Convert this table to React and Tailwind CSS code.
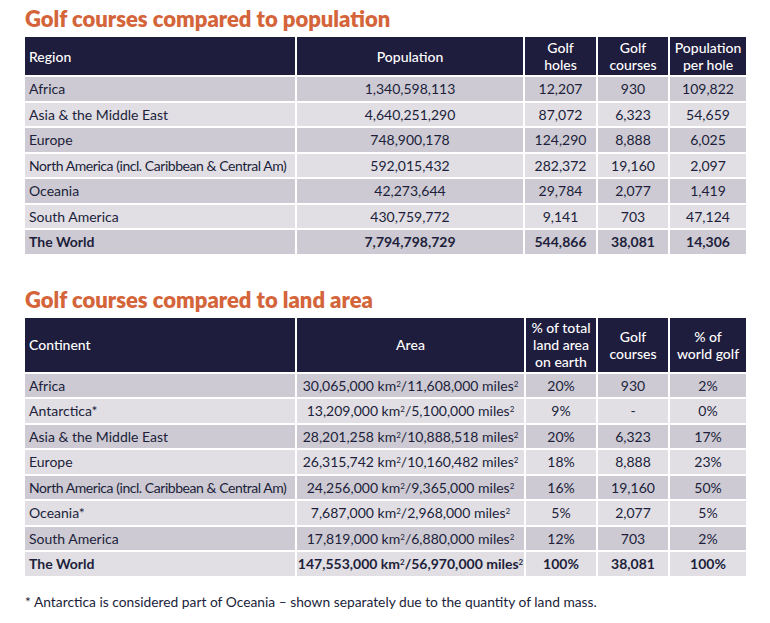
import React from 'react';

const popRows = [
  ['Africa', '1,340,598,113', '12,207', '930', '109,822'],
  ['Asia & the Middle East', '4,640,251,290', '87,072', '6,323', '54,659'],
  ['Europe', '748,900,178', '124,290', '8,888', '6,025'],
  ['North America (incl. Caribbean & Central Am)', '592,015,432', '282,372', '19,160', '2,097'],
  ['Oceania', '42,273,644', '29,784', '2,077', '1,419'],
  ['South America', '430,759,772', '9,141', '703', '47,124'],
];

const landRows = [
  ['Africa', '30,065,000', '11,608,000', '20%', '930', '2%'],
  ['Antarctica*', '13,209,000', '5,100,000', '9%', '-', '0%'],
  ['Asia & the Middle East', '28,201,258', '10,888,518', '20%', '6,323', '17%'],
  ['Europe', '26,315,742', '10,160,482', '18%', '8,888', '23%'],
  ['North America (incl. Caribbean & Central Am)', '24,256,000', '9,365,000', '16%', '19,160', '50%'],
  ['Oceania*', '7,687,000', '2,968,000', '5%', '2,077', '5%'],
  ['South America', '17,819,000', '6,880,000', '12%', '703', '2%'],
];

const th = 'bg-[#1f1d3d] text-white font-medium border-x-2 border-white text-center leading-[17px] px-1';
const td = 'border-2 border-white text-center h-[25.5px] py-0 whitespace-nowrap';

function rowBg(i) {
  return i % 2 === 0 ? 'bg-[#cdcad3]' : 'bg-[#e1dee4]';
}

// long region names get squeezed a little so they stay on one line
function nameCls(name) {
  return td + ' text-left pl-[4px] border-l-0 overflow-hidden' + (name.length > 30 ? ' tracking-[-0.45px]' : '');
}

function Area({ km, mi }) {
  return (
    <>
      {km} km<sup className="text-[8px]">2</sup>/{mi} miles<sup className="text-[8px]">2</sup>
    </>
  );
}

export default function App() {
  return (
    <div className="bg-white w-[770px] h-[623px] pl-[25px] pt-[5px] text-[#201e3a] text-[14px]" style={{ fontFamily: '"Lato", "Liberation Sans", sans-serif' }}>
      <h2 className="text-[#d4643a] font-extrabold text-[22px] leading-[28px] mb-[4px]">Golf courses compared to population</h2>
      <table className="w-[721px] border-collapse table-fixed">
        <colgroup>
          <col className="w-[271px]" />
          <col className="w-[228px]" />
          <col className="w-[73px]" />
          <col className="w-[72px]" />
          <col className="w-[77px]" />
        </colgroup>
        <thead>
          <tr className="h-[39px]">
            <th className={th + ' text-left pl-[4px] border-l-0'}>Region</th>
            <th className={th}>Population</th>
            <th className={th}>Golf<br />holes</th>
            <th className={th}>Golf<br />courses</th>
            <th className={th + ' border-r-0'}>Population<br />per hole</th>
          </tr>
        </thead>
        <tbody>
          {popRows.map((r, i) => (
            <tr key={r[0]} className={rowBg(i)}>
              <td className={nameCls(r[0])}>{r[0]}</td>
              <td className={td}>{r[1]}</td>
              <td className={td}>{r[2]}</td>
              <td className={td}>{r[3]}</td>
              <td className={td + ' border-r-0'}>{r[4]}</td>
            </tr>
          ))}
          <tr className="bg-[#cdcad3] font-bold">
            <td className={td + ' text-left pl-[4px] border-l-0'}>The World</td>
            <td className={td}>7,794,798,729</td>
            <td className={td}>544,866</td>
            <td className={td}>38,081</td>
            <td className={td + ' border-r-0'}>14,306</td>
          </tr>
        </tbody>
      </table>

      <h2 className="text-[#d4643a] font-extrabold text-[22px] leading-[28px] mt-[30px] mb-[4px]">Golf courses compared to land area</h2>
      <table className="w-[721px] border-collapse table-fixed">
        <colgroup>
          <col className="w-[271px]" />
          <col className="w-[229px]" />
          <col className="w-[72px]" />
          <col className="w-[72px]" />
          <col className="w-[77px]" />
        </colgroup>
        <thead>
          <tr className="h-[55px]">
            <th className={th + ' text-left pl-[4px] border-l-0'}>Continent</th>
            <th className={th}>Area</th>
            <th className={th}>% of total<br />land area<br />on earth</th>
            <th className={th}>Golf<br />courses</th>
            <th className={th + ' border-r-0'}>% of<br />world golf</th>
          </tr>
        </thead>
        <tbody>
          {landRows.map((r, i) => (
            <tr key={r[0]} className={rowBg(i)}>
              <td className={nameCls(r[0])}>{r[0]}</td>
              <td className={td}><Area km={r[1]} mi={r[2]} /></td>
              <td className={td}>{r[3]}</td>
              <td className={td}>{r[4]}</td>
              <td className={td + ' border-r-0'}>{r[5]}</td>
            </tr>
          ))}
          <tr className="bg-[#e1dee4] font-bold">
            <td className={td + ' text-left pl-[4px] border-l-0'}>The World</td>
            <td className={td}><Area km="147,553,000" mi="56,970,000" /></td>
            <td className={td}>100%</td>
            <td className={td}>38,081</td>
            <td className={td + ' border-r-0'}>100%</td>
          </tr>
        </tbody>
      </table>

      <p className="mt-[14px] text-[13.8px]">* Antarctica is considered part of Oceania – shown separately due to the quantity of land mass.</p>
    </div>
  );
}
